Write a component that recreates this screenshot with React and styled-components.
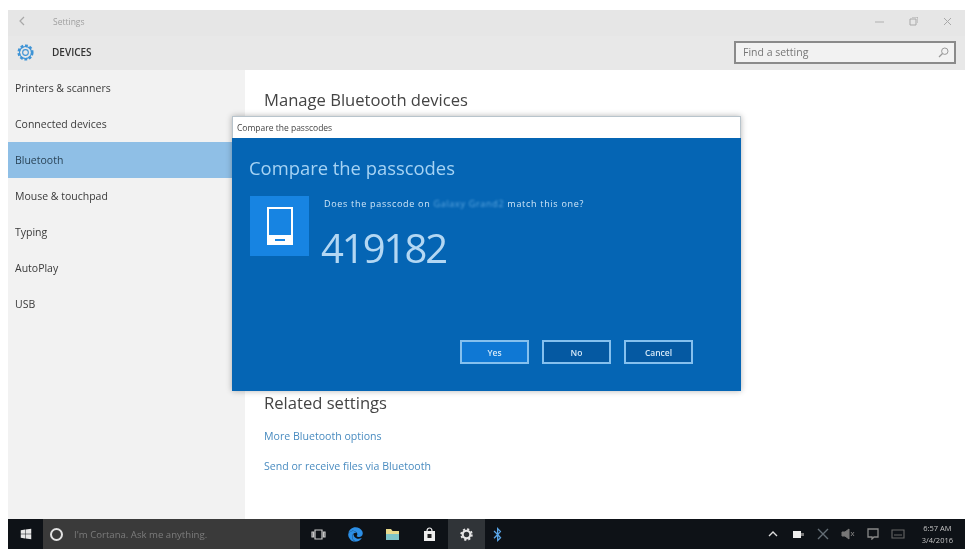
import styled, { createGlobalStyle } from "styled-components";
import { FaWindows, FaEdge, FaBluetoothB } from "react-icons/fa";

const GlobalStyle = createGlobalStyle`
  html, body {
    margin: 0;
    background: #fff;
  }
  * {
    box-sizing: border-box;
  }
`;

const Page = styled.div`
  width: 968px;
  height: 551px;
  padding: 10px 3px 2px 8px;
  font-family: "Open Sans", "Noto Sans", sans-serif;
  filter: blur(0.6px);
  overflow: hidden;
`;
const Window = styled.div`
  position: relative;
  height: 100%;
  display: flex;
  flex-direction: column;
`;

const TitleBar = styled.div`
  height: 26px;
  flex: none;
  background: #e6e6e6;
  display: flex;
  align-items: center;
  padding: 0 13px 4px 10px;
`;
const BackArrow = styled.svg`
  width: 8px;
  height: 10px;
  margin-right: 27px;
`;
const WindowName = styled.span`
  font-size: 8.5px;
  color: #a0a0a0;
`;
const WindowButtons = styled.div`
  margin-left: auto;
  display: flex;
  align-items: center;
  gap: 25px;
`;
const WindowGlyph = styled.svg`
  width: 9px;
  height: 9px;
`;

const HeaderBar = styled.div`
  height: 34px;
  flex: none;
  background: #e8e8e8;
  display: flex;
  align-items: center;
  padding: 0 9px 2px 8px;
`;
const GearIcon = styled.svg`
  width: 19px;
  height: 19px;
  margin-right: 17px;
`;
const HeaderTitle = styled.span`
  font-size: 10px;
  font-weight: 600;
  color: #333;
`;
const SearchBox = styled.div`
  margin-left: auto;
  width: 222px;
  height: 23px;
  border: 2px solid #8a8a8a;
  background: #f2f2f2;
  display: flex;
  align-items: center;
  justify-content: space-between;
  padding: 0 5px 0 7px;
  font-size: 10.5px;
  color: #777;
`;

const Body = styled.div`
  flex: 1;
  min-height: 0;
  display: flex;
`;
const Sidebar = styled.nav`
  width: 237px;
  flex: none;
  background: #f2f2f2;
`;
const NavItem = styled.div`
  height: 36px;
  display: flex;
  align-items: center;
  padding-left: 7px;
  font-size: 10.5px;
  color: ${(p) => (p.$active ? "#2a4458" : "#3a3a3a")};
  background: ${(p) => (p.$active ? "#8fbfe6" : "transparent")};
`;

const Content = styled.main`
  flex: 1;
  background: #fff;
  padding: 17px 0 0 19px;
`;
const SectionTitle = styled.h2`
  margin: 0;
  font-size: 16.6px;
  line-height: 26px;
  font-weight: 400;
  color: #444;
`;
const Related = styled.section`
  margin-top: 277px;
`;
const SettingLink = styled.a`
  display: block;
  margin-top: ${(p) => p.$gap}px;
  font-size: 10.6px;
  line-height: 14px;
  color: #4a8cc0;
`;

const Dialog = styled.div`
  position: absolute;
  left: 224px;
  top: 106px;
  width: 509px;
  height: 275px;
  display: flex;
  flex-direction: column;
  box-shadow: 0 0 6px rgba(0, 0, 0, 0.3);
`;
const DialogTitle = styled.div`
  height: 22px;
  flex: none;
  background: #fff;
  border: 1px solid #b8c4cc;
  border-bottom: none;
  display: flex;
  align-items: center;
  padding-left: 4px;
  font-size: 8.5px;
  color: #444;
`;
const DialogBody = styled.div`
  flex: 1;
  background: #0565b4;
  padding: 17px 48px 27px 18px;
  display: flex;
  flex-direction: column;
`;
const DialogHeading = styled.h1`
  margin: 0 0 0 -1px;
  font-size: 18.4px;
  line-height: 26px;
  font-weight: 400;
  color: #a6d3f4;
`;
const DialogRow = styled.div`
  margin-top: 15px;
  display: flex;
  gap: 15px;
`;
const PhoneTile = styled.div`
  width: 59px;
  height: 60px;
  background: #1784e2;
  display: flex;
  align-items: center;
  justify-content: center;
`;
const PhoneIcon = styled.svg`
  width: 28px;
  height: 40px;
`;
const Question = styled.div`
  font-size: 9px;
  line-height: 16px;
  letter-spacing: 0.7px;
  color: #cfe6f8;
`;
const HiddenName = styled.span`
  color: #5fa8e0;
  filter: blur(1px);
`;
const Passcode = styled.div`
  margin: 14px 0 0 -3px;
  font-size: 40px;
  line-height: 44px;
  color: #b3d7f3;
  letter-spacing: -2px;
`;
const DialogActions = styled.div`
  margin-top: auto;
  display: flex;
  justify-content: flex-end;
  gap: 13px;
`;
const DialogButton = styled.button`
  width: 69px;
  height: 24px;
  padding: 0;
  border: 2px solid #85c0ee;
  background: ${(p) => (p.$primary ? "#0f78d4" : "#0559a2")};
  color: #d5e9f8;
  font-family: inherit;
  font-size: 8.5px;
  font-weight: 600;
`;

const Taskbar = styled.footer`
  height: 30px;
  flex: none;
  background: #0e1217;
  display: flex;
  align-items: stretch;
  color: #ddd;
`;
const StartButton = styled.div`
  width: 35px;
  display: flex;
  align-items: center;
  justify-content: center;
  color: #e8e8e8;
  font-size: 12px;
`;
const CortanaBox = styled.div`
  width: 257px;
  background: #3a3a3a;
  display: flex;
  align-items: center;
  gap: 11px;
  padding-left: 7px;
  font-size: 9.6px;
  color: #7c7c7c;
`;
const CortanaRing = styled.span`
  width: 13px;
  height: 13px;
  border: 2px solid #e2e2e2;
  border-radius: 50%;
`;
const TaskIcons = styled.div`
  display: flex;
`;
const TaskIcon = styled.div`
  width: ${(p) => p.$width || 37}px;
  display: flex;
  align-items: center;
  justify-content: center;
  font-size: 15px;
  color: ${(p) => p.$color || "#ddd"};
  background: ${(p) => (p.$active ? "#303438" : "transparent")};
`;
const Glyph = styled.svg`
  width: ${(p) => p.$size || 15}px;
  height: ${(p) => p.$size || 15}px;
`;
const Tray = styled.div`
  margin-left: auto;
  display: flex;
  align-items: center;
  gap: 11px;
  padding-right: 12px;
`;
const TrayIcon = styled.svg`
  width: 14px;
  height: 12px;
`;
const Clock = styled.div`
  margin-left: 6px;
  font-size: 7.5px;
  line-height: 12px;
  color: #c4c4c4;
  text-align: center;
`;

const navItems = [
  "Printers & scanners",
  "Connected devices",
  "Bluetooth",
  "Mouse & touchpad",
  "Typing",
  "AutoPlay",
  "USB",
];

const App = () => {
  return (
    <Page>
      <GlobalStyle />
      <Window>
        <TitleBar>
          <BackArrow viewBox="0 0 8 10">
            <path d="M6 1 2 5l4 4" fill="none" stroke="#a8a8a8" strokeWidth="1.2" />
          </BackArrow>
          <WindowName>Settings</WindowName>
          <WindowButtons>
            <WindowGlyph viewBox="0 0 9 9">
              <path d="M0 5h9" stroke="#b0b0b0" strokeWidth="1" />
            </WindowGlyph>
            <WindowGlyph viewBox="0 0 9 9">
              <path d="M1 2h6v6H1zM3 0h6v6" fill="none" stroke="#a8a8a8" strokeWidth="1" />
            </WindowGlyph>
            <WindowGlyph viewBox="0 0 9 9">
              <path d="m1 1 7 7M8 1 1 8" stroke="#a8a8a8" strokeWidth="1" />
            </WindowGlyph>
          </WindowButtons>
        </TitleBar>
        <HeaderBar>
          <GearIcon viewBox="0 0 24 24">
            <circle cx="12" cy="12" r="8.5" fill="none" stroke="#3f94d6" strokeWidth="3.4" strokeDasharray="3.4 2.2" />
            <circle cx="12" cy="12" r="7.6" fill="none" stroke="#3f94d6" strokeWidth="1.4" />
            <circle cx="12" cy="12" r="3.6" fill="none" stroke="#3f94d6" strokeWidth="1.4" />
          </GearIcon>
          <HeaderTitle>DEVICES</HeaderTitle>
          <SearchBox>
            <span>Find a setting</span>
            <svg width="11" height="11" viewBox="0 0 11 11">
              <circle cx="6.8" cy="4.2" r="3.2" fill="none" stroke="#999" strokeWidth="1" />
              <path d="M4.5 6.5 1 10" stroke="#999" strokeWidth="1.2" />
            </svg>
          </SearchBox>
        </HeaderBar>
        <Body>
          <Sidebar>
            {navItems.map((item) => (
              <NavItem key={item} $active={item === "Bluetooth"}>
                {item}
              </NavItem>
            ))}
          </Sidebar>
          <Content>
            <SectionTitle>Manage Bluetooth devices</SectionTitle>
            <Related>
              <SectionTitle>Related settings</SectionTitle>
              <SettingLink $gap={13}>More Bluetooth options</SettingLink>
              <SettingLink $gap={16}>Send or receive files via Bluetooth</SettingLink>
            </Related>
          </Content>
        </Body>
        <Taskbar>
          <StartButton>
            <FaWindows />
          </StartButton>
          <CortanaBox>
            <CortanaRing />
            <span>I'm Cortana. Ask me anything.</span>
          </CortanaBox>
          <TaskIcons>
            <TaskIcon>
              <Glyph viewBox="0 0 15 15">
                <path d="M4 3h7v9H4zM1 5h1.5v5H1zM12.5 5H14v5h-1.5z" fill="none" stroke="#c8c8c8" strokeWidth="1.2" />
              </Glyph>
            </TaskIcon>
            <TaskIcon $color="#2c8fe6">
              <FaEdge />
            </TaskIcon>
            <TaskIcon>
              <Glyph viewBox="0 0 15 15">
                <path d="M1 2h5l1.5 2H14v9H1z" fill="#e8d98c" />
                <path d="M1 7h13v6H1z" fill="#7fc4c8" />
              </Glyph>
            </TaskIcon>
            <TaskIcon>
              <Glyph viewBox="0 0 15 15">
                <path d="M2 4h11v10H2z" fill="#eee" />
                <path d="M5 4c0-4 5-4 5 0" fill="none" stroke="#eee" strokeWidth="1.2" />
                <path d="M5.500 7h4v4h-4z" fill="#222" />
              </Glyph>
            </TaskIcon>
            <TaskIcon $active>
              <Glyph $size={13} viewBox="0 0 24 24">
                <circle cx="12" cy="12" r="7" fill="none" stroke="#e6e6e6" strokeWidth="4" />
                <circle cx="12" cy="12" r="10" fill="none" stroke="#e6e6e6" strokeWidth="3" strokeDasharray="4 3.85" />
              </Glyph>
            </TaskIcon>
            <TaskIcon $color="#5aa6e8" $width={24}>
              <FaBluetoothB />
            </TaskIcon>
          </TaskIcons>
          <Tray>
            <TrayIcon viewBox="0 0 14 12">
              <path d="m3 8 4-4 4 4" fill="none" stroke="#ddd" strokeWidth="1.4" />
            </TrayIcon>
            <TrayIcon viewBox="0 0 14 12">
              <path d="M2 3h8v7H2z" fill="#eee" />
              <path d="M10 5h3v3h-3z" fill="#777" />
            </TrayIcon>
            <TrayIcon viewBox="0 0 14 12">
              <path d="m2 1 10 10M12 1 2 11" stroke="#646e76" strokeWidth="1.4" />
            </TrayIcon>
            <TrayIcon viewBox="0 0 14 12">
              <path d="M1 4h3l4-3v10L4 8H1zM10 4l3 4M13 4l-3 4" fill="#777" stroke="#777" />
            </TrayIcon>
            <TrayIcon viewBox="0 0 14 12">
              <path d="M2 1h10v8H8l-2 2V9H2z" fill="none" stroke="#888" strokeWidth="1.3" />
            </TrayIcon>
            <TrayIcon viewBox="0 0 14 12">
              <path d="M1 2h12v8H1zM3 7h8" fill="none" stroke="#666" strokeWidth="1.1" />
            </TrayIcon>
            <Clock>
              6:57 AM
              <br />
              3/4/2016
            </Clock>
          </Tray>
        </Taskbar>
        <Dialog>
          <DialogTitle>Compare the passcodes</DialogTitle>
          <DialogBody>
            <DialogHeading>Compare the passcodes</DialogHeading>
            <DialogRow>
              <PhoneTile>
                <PhoneIcon viewBox="0 0 28 40">
                  <path d="M2 2h24v36H2z" fill="none" stroke="#fff" strokeWidth="2" />
                  <path d="M2 29h24v9H2z" fill="#fff" />
                  <path d="M9 34h10" stroke="#1784e2" strokeWidth="2" />
                </PhoneIcon>
              </PhoneTile>
              <div>
                <Question>
                  Does the passcode on <HiddenName>Galaxy Grand2</HiddenName> match this one?
                </Question>
                <Passcode>419182</Passcode>
              </div>
            </DialogRow>
            <DialogActions>
              <DialogButton $primary>Yes</DialogButton>
              <DialogButton>No</DialogButton>
              <DialogButton>Cancel</DialogButton>
            </DialogActions>
          </DialogBody>
        </Dialog>
      </Window>
    </Page>
  );
};

export default App;
